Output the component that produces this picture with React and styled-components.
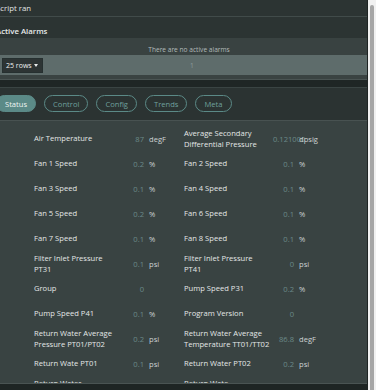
import React from "react";
import styled, { createGlobalStyle } from "styled-components";

const Global = createGlobalStyle`
  html, body { margin: 0; padding: 0; background: #2c3433; overflow: hidden; }
  body { font-family: "Open Sans", "Noto Sans", sans-serif; }
  * { box-sizing: border-box; }
`;

const Root = styled.div`
  display: flex;
  width: 376px;
  height: 390px;
`;

const Main = styled.div`
  flex: 1;
  min-width: 0;
  overflow: hidden;
`;

const Inner = styled.div`
  width: 386px;
  height: 100%;
  margin-left: -4px;
  display: flex;
  flex-direction: column;
  font-size: 7.6px;
  color: #e2e5e5;
`;

const ScriptRow = styled.div`
  height: 17px;
  display: flex;
  align-items: center;
  border-bottom: 1px solid #414b4a;
  background: #2c3433;
  padding-bottom: 1px;
  font-size: 7.8px;
`;

const SectionTitle = styled.div`
  height: 21px;
  padding-top: 9px;
  line-height: 11px;
  font-size: 7.8px;
  font-weight: 600;
  color: #e8ebeb;
  background: #2c3433;
`;

const AlarmPanel = styled.div`
  height: 17px;
  background: #394241;
  display: flex;
  justify-content: center;
  align-items: flex-end;
  padding-bottom: 1px;
`;

const Empty = styled.span`
  font-size: 6.6px;
  color: #b3bbba;
`;

const Pager = styled.div`
  height: 20px;
  background: #5e6c6b;
  display: grid;
  grid-template-columns: 1fr auto 1fr;
  align-items: center;
  padding-left: 6px;
`;

const RowsSelect = styled.div`
  width: 41px;
  height: 15px;
  background: #2d3434;
  border: 1px solid #263030;
  display: flex;
  align-items: center;
  justify-content: space-between;
  padding: 0 3px 0 3px;
  font-size: 7px;
  color: #eef0f0;
`;

const Caret = styled.span`
  width: 0;
  height: 0;
  border-left: 2.5px solid transparent;
  border-right: 2.5px solid transparent;
  border-top: 3px solid #e8eaea;
  margin-right: 1px;
`;

const PageNum = styled.span`
  font-size: 6.6px;
  color: #8e9c9b;
`;

const PanelFoot = styled.div`
  height: 5px;
  background: #3a4342;
  border-bottom: 1px solid #4a5453;
`;

const DarkGap = styled.div`
  height: 7px;
  background: #1f2625;
`;

const Tabs = styled.div`
  height: 34px;
  background: #2b3332;
  border-top: 1px solid #3a4443;
  border-bottom: 1px solid #485251;
  display: flex;
  align-items: flex-start;
  gap: 8px;
  padding-top: 7px;
`;

const Tab = styled.button`
  height: 17px;
  border-radius: 9px;
  border: 1px solid #5b8a87;
  background: ${(p) => (p.$active ? "#5b8a87" : "transparent")};
  color: ${(p) => (p.$active ? "#eef4f3" : "#6fa09d")};
  font-family: inherit;
  font-size: 7.6px;
  padding: 0 8px;
  display: flex;
  align-items: center;
  cursor: pointer;
`;

const Content = styled.div`
  flex: 1;
  min-height: 0;
  overflow: hidden;
  background: #394342;
  padding: 5px 0 0 38px;
`;

const Grid = styled.div`
  display: grid;
  grid-template-columns: 150px 150px;
  grid-auto-rows: 25px;
`;

const Cell = styled.div`
  display: grid;
  grid-template-columns: 86px 24px auto;
  column-gap: 0;
  align-items: center;
`;

const Label = styled.div`
  line-height: 11px;
  color: #e4e7e7;
  padding-right: 1px;
`;

const Value = styled.div`
  margin-left: 3px;
  text-align: right;
  white-space: nowrap;
  color: #6b8a88;
`;

const Unit = styled.div`
  padding-left: 5px;
  color: #cdd2d2;
  white-space: nowrap;
`;

const Footer = styled.div`
  height: 7px;
  background: #1e2524;
  border-top: 1px solid #4a5453;
`;

const Scrollbar = styled.div`
  width: 9px;
  height: 100%;
  background: #f1f1f1;
  border-left: 1px solid #1e2423;
  padding: 5px 1px 0 2px;
`;

const Thumb = styled.div`
  height: 100%;
  width: 4px;
  border-radius: 2px 2px 0 0;
  background: #a6a6a6;
`;

const data = [
  ["Air Temperature", "87", "degF"],
  ["Average Secondary Differential Pressure", "0.121000", "dpsig"],
  ["Fan 1 Speed", "0.2", "%"],
  ["Fan 2 Speed", "0.1", "%"],
  ["Fan 3 Speed", "0.1", "%"],
  ["Fan 4 Speed", "0.1", "%"],
  ["Fan 5 Speed", "0.2", "%"],
  ["Fan 6 Speed", "0.1", "%"],
  ["Fan 7 Speed", "0.1", "%"],
  ["Fan 8 Speed", "0.1", "%"],
  ["Filter Inlet Pressure PT31", "0.1", "psi"],
  ["Filter Inlet Pressure PT41", "0", "psi"],
  ["Group", "0", ""],
  ["Pump Speed P31", "0.2", "%"],
  ["Pump Speed P41", "0.1", "%"],
  ["Program Version", "0", ""],
  ["Return Water Average Pressure PT01/PT02", "0.2", "psi"],
  ["Return Water Average Temperature\u00a0TT01/TT02", "86.8", "degF"],
  ["Return Wate PT01", "0.1", "psi"],
  ["Return Water PT02", "0.2", "psi"],
  ["Return Water Temperature TT01", "86.9", "degF"],
  ["Return Wate Temperature TT02", "86.7", "degF"],
];

const tabs = ["Status", "Control", "Config", "Trends", "Meta"];

export default function App() {
  return (
    <>
      <Global />
      <Root>
        <Main>
          <Inner>
            <ScriptRow>Script ran</ScriptRow>
            <SectionTitle>Active Alarms</SectionTitle>
            <AlarmPanel>
              <Empty>There are no active alarms</Empty>
            </AlarmPanel>
            <Pager>
              <RowsSelect>
                25 rows <Caret />
              </RowsSelect>
              <PageNum>1</PageNum>
              <span />
            </Pager>
            <PanelFoot />
            <DarkGap />
            <Tabs>
              {tabs.map((t, i) => (
                <Tab key={t} $active={i === 0}>
                  {t}
                </Tab>
              ))}
            </Tabs>
            <Content>
              <Grid>
                {data.map(([l, v, u]) => (
                  <Cell key={l}>
                    <Label>{l}</Label>
                    <Value>{v}</Value>
                    <Unit>{u}</Unit>
                  </Cell>
                ))}
              </Grid>
            </Content>
            <Footer />
          </Inner>
        </Main>
        <Scrollbar>
          <Thumb />
        </Scrollbar>
      </Root>
    </>
  );
}
